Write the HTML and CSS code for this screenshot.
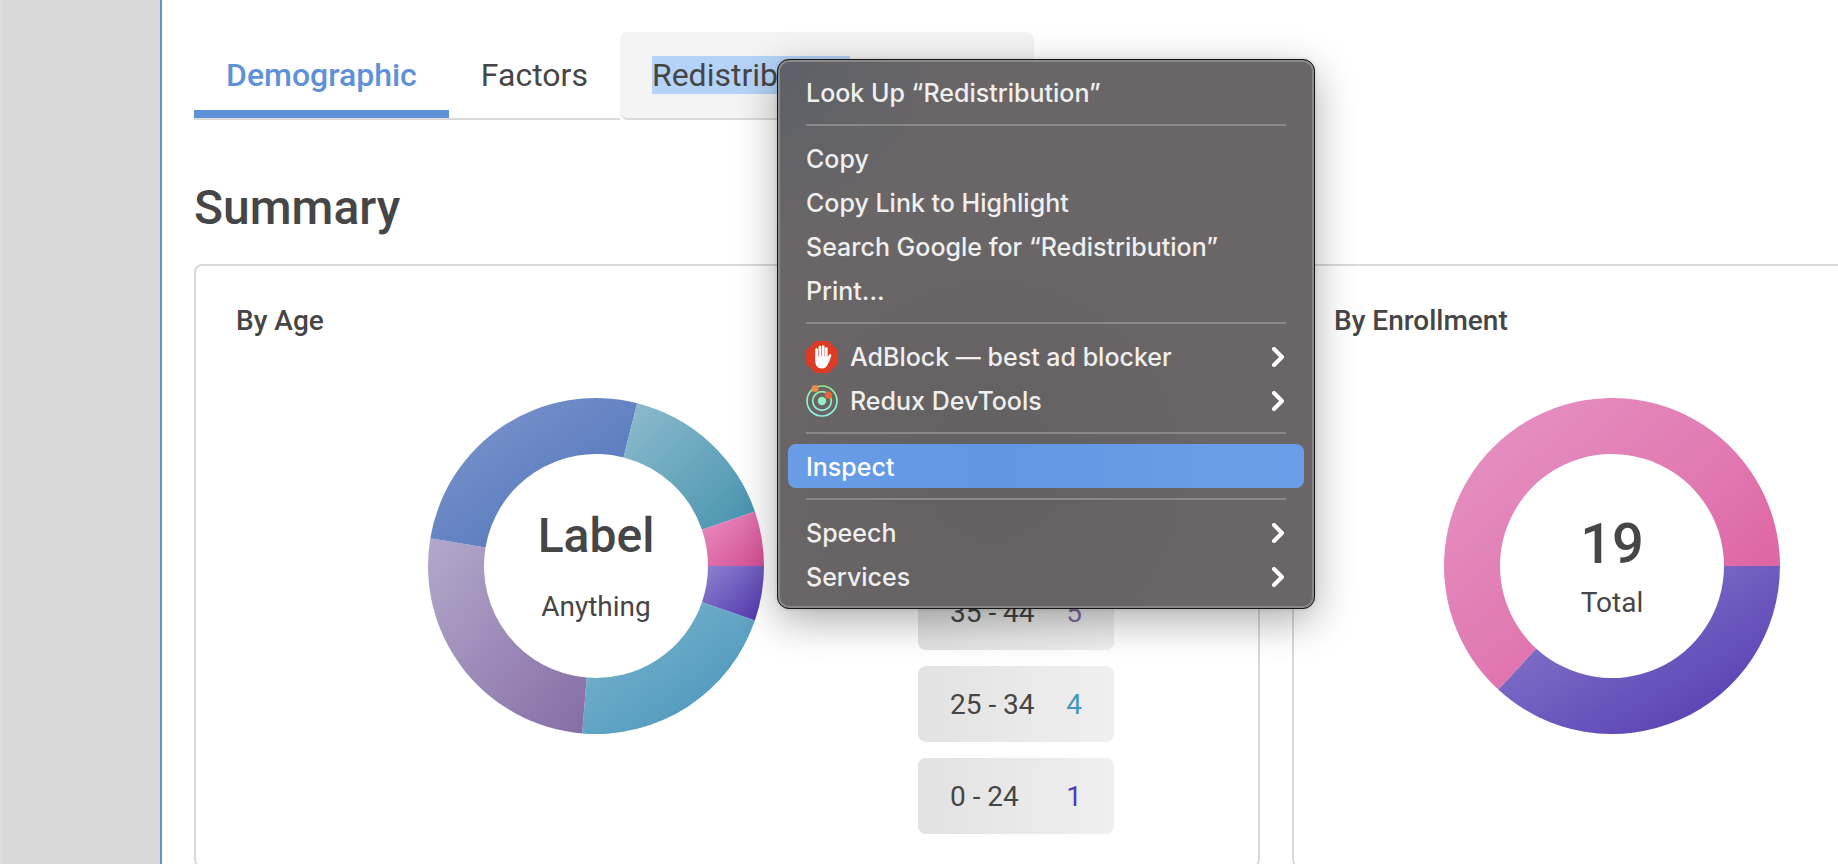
FILE: index.html
```html
<!DOCTYPE html>
<html lang="en">
<head>
<meta charset="utf-8">
<title>Summary</title>
<link rel="stylesheet" href="styles.css">
</head>
<body>
<div class="app">
  <aside class="sidebar"></aside>
  <main class="main">
    <div class="tabs" role="tablist">
      <button class="tab tab-active" role="tab" aria-selected="true">Demographic</button>
      <button class="tab" role="tab" aria-selected="false">Factors</button>
      <button class="tab tab-hover" role="tab" aria-selected="false"><span class="selection">Redistribution</span></button>
    </div>
    <h1 class="title">Summary</h1>
    <div class="cards">
      <section class="card">
        <h2 class="card-title">By Age</h2>
        <div class="card-body card-body-age">
          <div class="donut">
            <svg class="ring" viewBox="0 0 336 336" aria-hidden="true">
              <defs>
                <linearGradient id="violet" x1="0" y1="0" x2="1" y2="1"><stop offset="0" stop-color="#9083d0"/><stop offset="1" stop-color="#5035ae"/></linearGradient>
                <linearGradient id="sky" x1="0" y1="0" x2="1" y2="1"><stop offset="0" stop-color="#80b8d0"/><stop offset="1" stop-color="#4491b8"/></linearGradient>
                <linearGradient id="mauve" x1="0" y1="0" x2="1" y2="1"><stop offset="0" stop-color="#b4a8cb"/><stop offset="1" stop-color="#846da4"/></linearGradient>
                <linearGradient id="blue" x1="0" y1="0" x2="1" y2="1"><stop offset="0" stop-color="#8198ce"/><stop offset="1" stop-color="#4a70b8"/></linearGradient>
                <linearGradient id="teal" x1="0" y1="0" x2="1" y2="1"><stop offset="0" stop-color="#8fbccd"/><stop offset="1" stop-color="#4592ae"/></linearGradient>
                <linearGradient id="pink" x1="0" y1="0" x2="1" y2="1"><stop offset="0" stop-color="#e98fc1"/><stop offset="1" stop-color="#d54f95"/></linearGradient>
                <linearGradient id="rose" x1="0" y1="0" x2="1" y2="1"><stop offset="0" stop-color="#e695c5"/><stop offset=".5" stop-color="#e17ab2"/><stop offset="1" stop-color="#da559a"/></linearGradient>
              </defs>
              <path fill="url(#violet)" d="M336 168A168 168 0 0 1 326.9 222.55L273.93 204.37A112 112 0 0 0 280 168Z"/>
              <path fill="url(#sky)" d="M326.9 222.55A168 168 0 0 1 154.13 335.43L158.75 279.62A112 112 0 0 0 273.93 204.37Z"/>
              <path fill="url(#mauve)" d="M154.13 335.43A168 168 0 0 1 2.29 140.35L57.53 149.57A112 112 0 0 0 158.75 279.62Z"/>
              <path fill="url(#blue)" d="M2.29 140.35A168 168 0 0 1 209.24 5.14L195.49 59.43A112 112 0 0 0 57.53 149.57Z"/>
              <path fill="url(#teal)" d="M209.24 5.14A168 168 0 0 1 326.9 113.45L273.93 131.63A112 112 0 0 0 195.49 59.43Z"/>
              <path fill="url(#pink)" d="M326.9 113.45A168 168 0 0 1 336 168L280 168A112 112 0 0 0 273.93 131.63Z"/>
            </svg>
            <div class="donut-text donut-text-label">
              <strong class="donut-label">Label</strong>
              <span class="donut-caption">Anything</span>
            </div>
          </div>
          <ul class="legend">
            <li class="legend-row"><span>35 - 44</span><span class="count-mauve">5</span></li>
            <li class="legend-row"><span>25 - 34</span><span class="count-sky">4</span></li>
            <li class="legend-row"><span>0 - 24</span><span class="count-violet">1</span></li>
          </ul>
        </div>
      </section>
      <section class="card card-last">
        <h2 class="card-title">By Enrollment</h2>
        <div class="card-body card-body-enrollment">
          <div class="donut">
            <svg class="ring" viewBox="0 0 336 336" aria-hidden="true">
              <path fill="url(#violet)" d="M336 168A168 168 0 0 1 54.22 291.6L92.14 250.4A112 112 0 0 0 280 168Z"/>
              <path fill="url(#rose)" d="M54.22 291.6A168 168 0 1 1 336 168L280 168A112 112 0 1 0 92.14 250.4Z"/>
            </svg>
            <div class="donut-text donut-text-total">
              <strong class="donut-number">19</strong>
              <span class="donut-caption">Total</span>
            </div>
          </div>
        </div>
      </section>
    </div>
  </main>
</div>

<div class="menu" role="menu">
  <button class="item" role="menuitem">Look Up “Redistribution”</button>
  <hr class="separator">
  <button class="item" role="menuitem">Copy</button>
  <button class="item" role="menuitem">Copy Link to Highlight</button>
  <button class="item" role="menuitem">Search Google for “Redistribution”</button>
  <button class="item" role="menuitem">Print...</button>
  <hr class="separator">
  <button class="item" role="menuitem">
    <svg class="item-icon" viewBox="0 0 32 32" aria-hidden="true">
      <path fill="#dc3c26" d="M9.5 0h13L32 9.5v13L22.500 32h-13L0 22.500v-13Z"/>
      <g fill="none" stroke="#fff" stroke-width="2.700" stroke-linecap="round"><path d="M10.600 8.500v10M13.900 6v12M17.200 5.500v12M20.300 7.500v11M24.100 14.500l-3.200 6.500"/></g>
      <path fill="#fff" d="M9.250 15.500h12.400v3l1.500-1.500 1.300.5-3 6.500c-1.300 2.500-3.200 3.500-5.600 3.500-4.200 0-6.600-3-6.600-7.500Z"/>
    </svg>
    <span>AdBlock — best ad blocker</span>
    <svg class="chevron" viewBox="0 0 12 20" aria-hidden="true"><path d="M2 2l8 8-8 8"/></svg>
  </button>
  <button class="item" role="menuitem">
    <svg class="item-icon" viewBox="0 0 32 32" aria-hidden="true">
      <defs><linearGradient id="mint" gradientUnits="userSpaceOnUse" x1="0" y1="0" x2="0" y2="32"><stop offset="0" stop-color="#98f08e"/><stop offset="1" stop-color="#8fefee"/></linearGradient></defs>
      <g fill="none" stroke="url(#mint)" stroke-width="1.700"><circle cx="16" cy="16" r="15"/><circle cx="16" cy="16" r="9.300"/></g>
      <circle cx="16" cy="16" r="4.200" fill="url(#mint)"/>
      <circle cx="9" cy="3.500" r="3.500" fill="#ea8f4b"/>
      <circle cx="22.300" cy="10.200" r="3.600" fill="#e9653c"/>
    </svg>
    <span>Redux DevTools</span>
    <svg class="chevron" viewBox="0 0 12 20" aria-hidden="true"><path d="M2 2l8 8-8 8"/></svg>
  </button>
  <hr class="separator">
  <button class="item item-active" role="menuitem">Inspect</button>
  <hr class="separator">
  <button class="item" role="menuitem"><span>Speech</span>
    <svg class="chevron" viewBox="0 0 12 20" aria-hidden="true"><path d="M2 2l8 8-8 8"/></svg>
  </button>
  <button class="item" role="menuitem"><span>Services</span>
    <svg class="chevron" viewBox="0 0 12 20" aria-hidden="true"><path d="M2 2l8 8-8 8"/></svg>
  </button>
</div>
</body>
</html>
```
FILE: styles.css
```css
* { box-sizing: border-box; }

body {
  margin: 0;
  overflow: hidden;
  background: #fff;
  color: #464646;
  font-family: Roboto, "Liberation Sans", sans-serif;
}

button {
  margin: 0;
  border: 0;
  background: none;
  color: inherit;
  font: inherit;
  text-align: left;
}

.app {
  display: flex;
  min-height: 100vh;
}

.sidebar {
  flex: none;
  width: 162px;
  border-left: 2px solid #dfdfdf;
  border-right: 2px solid #5f91d9;
  background: #d9d9d9;
}

.main {
  flex: 1;
  min-width: 0;
  padding: 32px 0 0 32px;
}

.tabs { display: flex; }

.tab {
  padding: 24px 32px;
  border-bottom: 2px solid #d9d9d9;
  font-size: 32px;
  line-height: 38px;
}

.tab-active {
  box-shadow: inset 0 -8px #5f91d9;
  color: #5f91d9;
  font-weight: 500;
}

.tab-hover {
  width: 414px;
  border-radius: 8px;
  background: #f4f4f4;
}

.selection {
  display: inline-block;
  background: #b5d3f8;
}

.title {
  margin: 60px 0 28px;
  font-size: 48px;
  font-weight: 500;
  line-height: 56px;
}

.cards {
  display: grid;
  grid-template-columns: 533fr 273fr;
  gap: 32px;
}

.card {
  min-width: 0;
  padding: 37px 40px 32px;
  border: 2px solid #d9d9d9;
  border-radius: 8px;
}

.card-last {
  border-right: 0;
  border-radius: 8px 0 0 8px;
}

.card-title {
  margin: 0 0 59px;
  font-size: 28px;
  font-weight: 500;
  line-height: 36px;
}

.card-body {
  display: flex;
  align-items: flex-start;
}

.card-body-age {
  gap: 154px;
  padding-left: 192px;
}

.card-body-enrollment { padding-left: 110px; }

.donut {
  display: grid;
  flex: none;
  width: 336px;
}

.ring,
.donut-text { grid-area: 1 / 1; }

.ring {
  display: block;
  width: 100%;
}

.donut-text {
  display: flex;
  flex-direction: column;
  align-items: center;
  justify-content: center;
  padding-bottom: 2px;
}

.donut-text-label { gap: 27px; }
.donut-text-total { gap: 10px; }

.donut-label {
  font-size: 48px;
  font-weight: 500;
  line-height: 56px;
}

.donut-number {
  font-size: 56px;
  font-weight: 500;
  line-height: 66px;
}

.donut-caption {
  font-size: 28px;
  line-height: 32px;
}

.legend {
  display: grid;
  flex: none;
  gap: 16px;
  width: 196px;
  margin: 176px 0 0;
  padding: 0;
  list-style: none;
}

.legend-row {
  display: flex;
  justify-content: space-between;
  padding: 21px 32px 19px;
  border-radius: 8px;
  background: linear-gradient(90deg, #e2e2e2, #efefef);
  font-size: 28px;
  line-height: 36px;
}

.count-mauve { color: #846da4; }
.count-sky { color: #4697bd; }
.count-violet { color: #553bb8; }

.menu {
  position: absolute;
  top: 59px;
  left: 777px;
  width: 538px;
  padding: 10px;
  border: 1px solid #161617;
  border-radius: 12px;
  background:
    radial-gradient(circle at 0 0, #5c6068, transparent 180px),
    radial-gradient(circle at 40% 75%, #636061, transparent 240px),
    #6a6667;
  box-shadow:
    inset 0 0 0 2px #8b8889,
    0 12px 40px rgba(0, 0, 0, 0.32),
    0 0 4px rgba(0, 0, 0, 0.12);
  color: #f0efef;
  font-family: Inter, "Liberation Sans", sans-serif;
  font-size: 25px;
  font-weight: 500;
}

.item {
  display: flex;
  align-items: center;
  gap: 12px;
  width: 100%;
  padding: 5px 20px 3px 18px;
  border-radius: 8px;
  line-height: 36px;
}

.item-active {
  background: linear-gradient(90deg, #6a9de7, #6096e3 40%, #6a9de7 80%);
  color: #fff;
}

.separator {
  height: 2px;
  margin: 10px 18px;
  border: 0;
  background: #8c898a;
}

.item-icon {
  flex: none;
  width: 32px;
  height: 32px;
}

.chevron {
  flex: none;
  width: 12px;
  height: 20px;
  margin-left: auto;
  fill: none;
  stroke: #fff;
  stroke-width: 4;
  stroke-linecap: round;
  stroke-linejoin: round;
}
```
